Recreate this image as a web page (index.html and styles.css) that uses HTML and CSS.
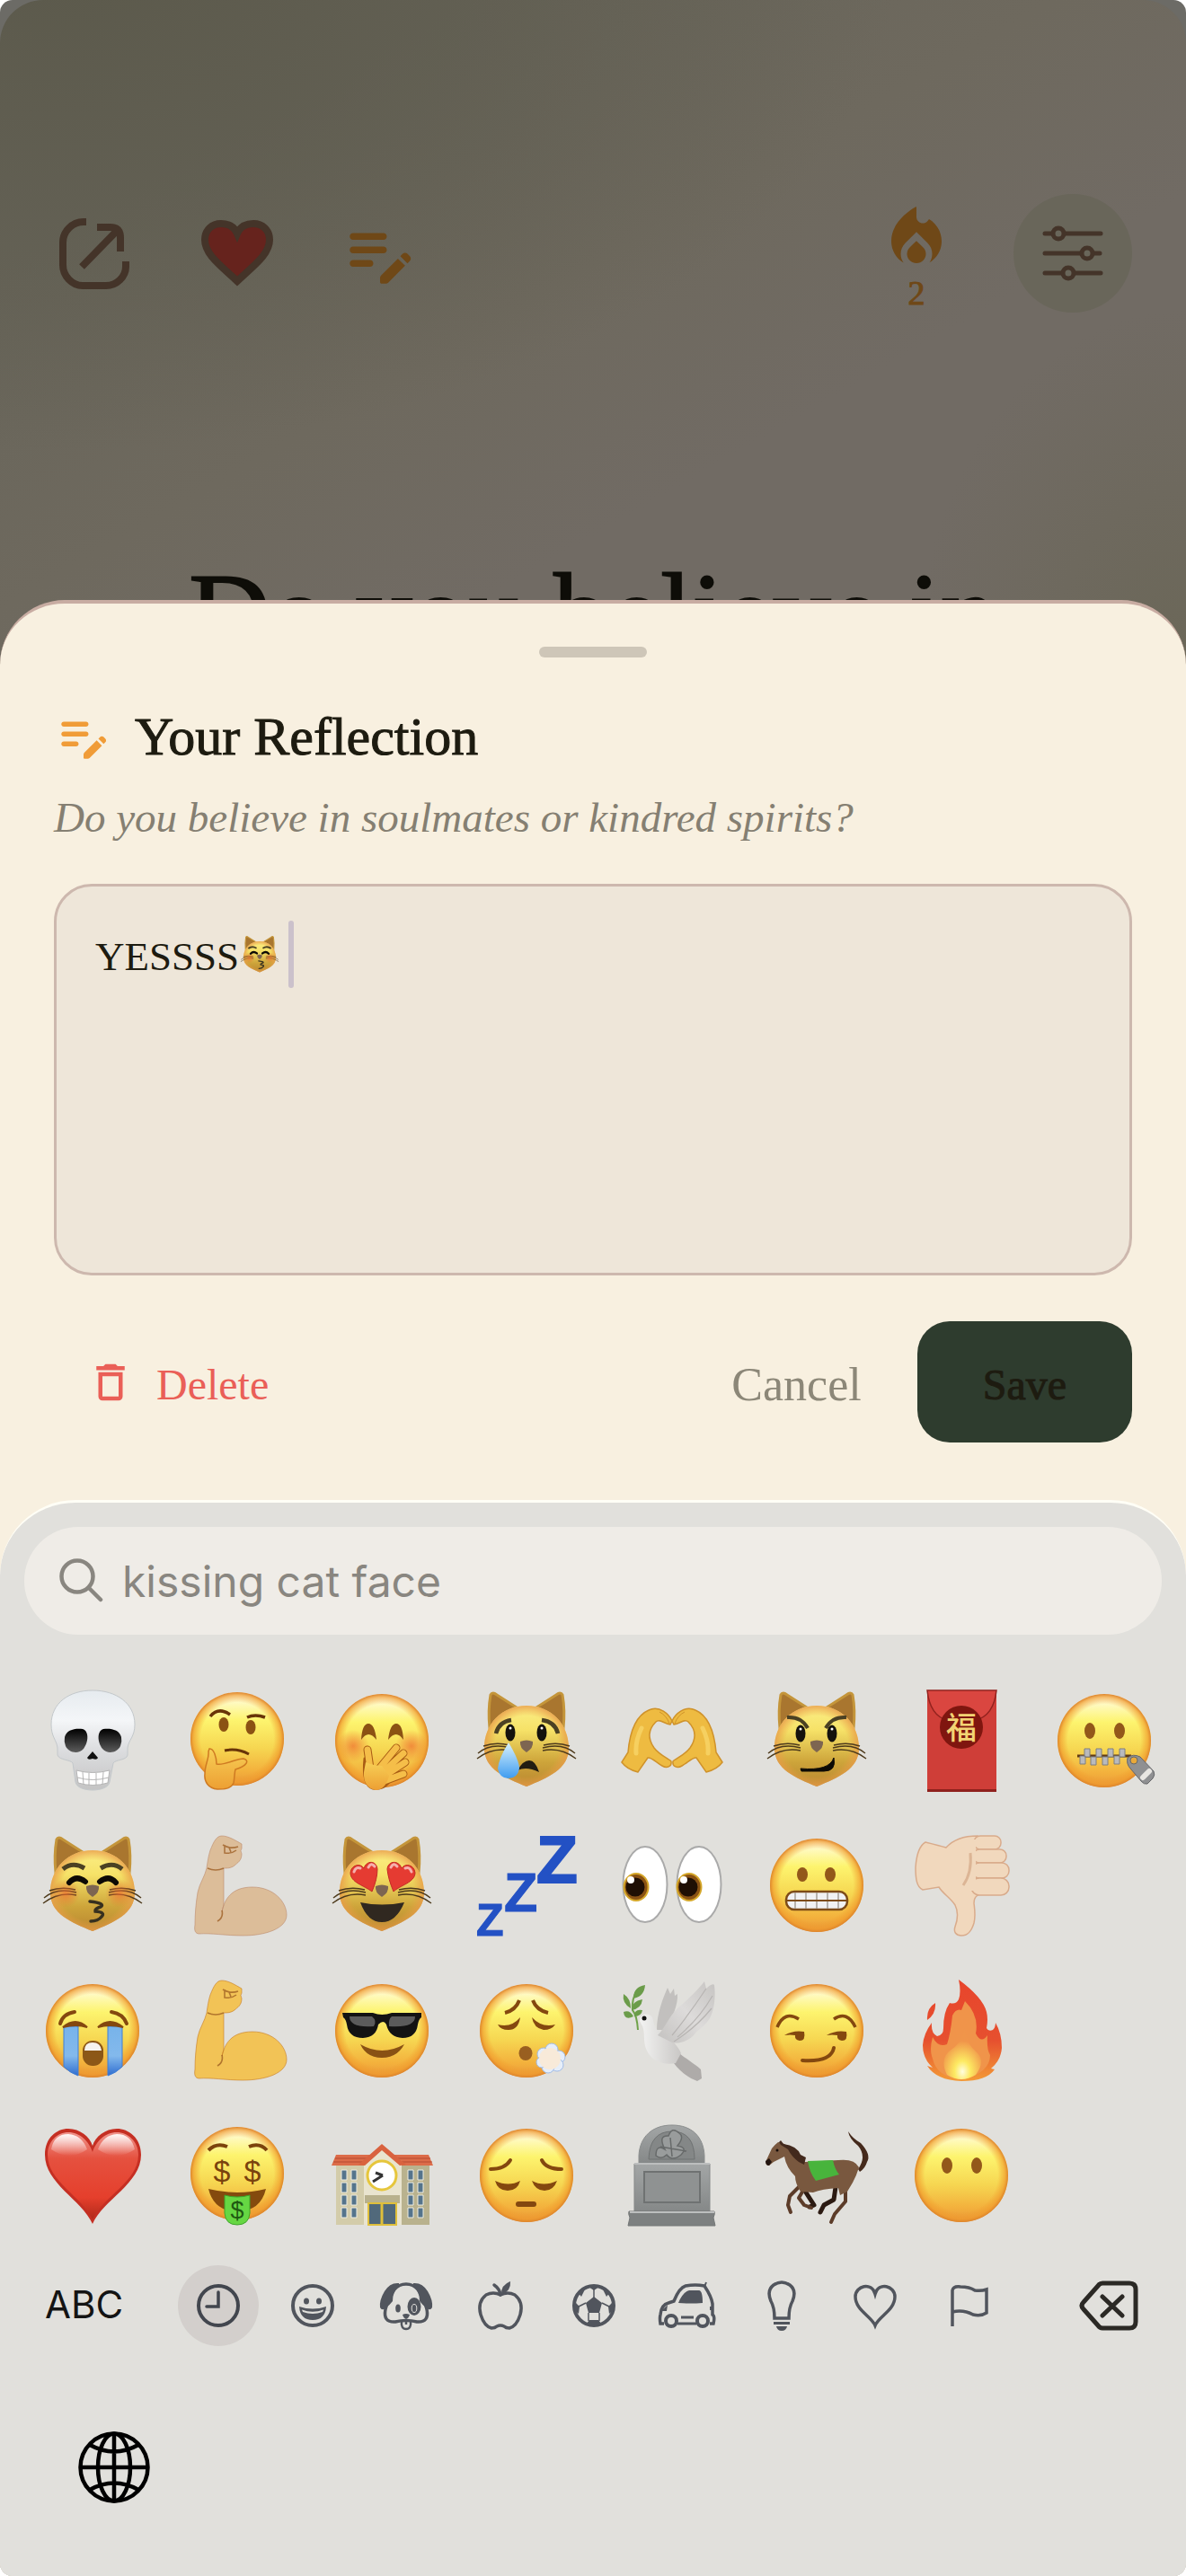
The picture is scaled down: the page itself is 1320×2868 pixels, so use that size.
FILE: index.html
```html
<!DOCTYPE html>
<html lang="en">
<head>
<meta charset="utf-8">
<meta name="viewport" content="width=device-width, initial-scale=1">
<title>Your Reflection</title>
<link rel="stylesheet" href="styles.css">
</head>
<body>
<svg class="sprite" width="0" height="0" aria-hidden="true">
  <defs>
    <linearGradient id="g-face" x1="0" y1="0" x2="0" y2="1"><stop offset=".04" stop-color="#fffce0"/><stop offset=".3" stop-color="#fdf46e"/><stop offset=".6" stop-color="#f6d651"/><stop offset=".85" stop-color="#f3b03c"/><stop offset="1" stop-color="#e8973a"/></linearGradient>
    <radialGradient id="g-rim"><stop offset=".78" stop-color="#f09a2c" stop-opacity="0"/><stop offset=".93" stop-color="#f09a2c" stop-opacity=".65"/><stop offset="1" stop-color="#dd842c"/></radialGradient>
    <linearGradient id="g-cat" x1="0" y1="0" x2="0" y2="1"><stop offset="0" stop-color="#fbee86"/><stop offset=".3" stop-color="#f6e268"/><stop offset=".7" stop-color="#cda43a"/><stop offset="1" stop-color="#b98630"/></linearGradient>
    <radialGradient id="g-catrim"><stop offset=".75" stop-color="#eba045" stop-opacity="0"/><stop offset="1" stop-color="#e89a4a" stop-opacity=".8"/></radialGradient>
    <radialGradient id="g-blush"><stop offset="0" stop-color="#ee6b2f" stop-opacity=".7"/><stop offset="1" stop-color="#ee6b2f" stop-opacity="0"/></radialGradient>
    <linearGradient id="g-hand" x1="0" y1="0" x2="0" y2="1"><stop offset="0" stop-color="#f7cf56"/><stop offset="1" stop-color="#ed9f33"/></linearGradient>
    <linearGradient id="g-bone" x1="0" y1="0" x2="0" y2="1"><stop offset="0" stop-color="#e6ebef"/><stop offset=".3" stop-color="#f4f6f8"/><stop offset=".6" stop-color="#dcdddf"/><stop offset="1" stop-color="#c4c4c4"/></linearGradient>
    <linearGradient id="g-socket" x1="0" y1="0" x2="0" y2="1"><stop offset="0" stop-color="#000"/><stop offset="1" stop-color="#5c5c5c"/></linearGradient>
    <linearGradient id="g-tear" x1="0" y1="0" x2="0" y2="1"><stop offset="0" stop-color="#d9f2fd"/><stop offset="1" stop-color="#3f9cf0"/></linearGradient>
    <linearGradient id="g-stream" x1="0" y1="0" x2="0" y2="1"><stop offset="0" stop-color="#77b3ea"/><stop offset=".6" stop-color="#83b9ec"/><stop offset="1" stop-color="#2f6dd0"/></linearGradient>
    <linearGradient id="g-red" x1="0" y1="0" x2="0" y2="1"><stop offset="0" stop-color="#f0958d"/><stop offset=".3" stop-color="#e5513f"/><stop offset=".75" stop-color="#e53f2c"/><stop offset="1" stop-color="#b02a1b"/></linearGradient>
    <linearGradient id="g-gloss" x1="0" y1="0" x2="0" y2="1"><stop offset="0" stop-color="#fff" stop-opacity=".95"/><stop offset="1" stop-color="#fff" stop-opacity="0"/></linearGradient>
    <linearGradient id="g-fire" x1="0" y1="0" x2="0" y2="1"><stop offset="0" stop-color="#e8452c"/><stop offset=".6" stop-color="#e6502f"/><stop offset="1" stop-color="#f39b36"/></linearGradient>
    <radialGradient id="g-glow" cx=".5" cy=".85" r=".6"><stop offset="0" stop-color="#fffde0"/><stop offset=".35" stop-color="#fdea62"/><stop offset="1" stop-color="#f0954a"/></radialGradient>
    <linearGradient id="g-stone" x1="0" y1="0" x2="0" y2="1"><stop offset="0" stop-color="#a3a6a6"/><stop offset="1" stop-color="#858888"/></linearGradient>
    <linearGradient id="g-bird" x1="0" y1="0" x2="1" y2="0"><stop offset="0" stop-color="#f3f3f2"/><stop offset="1" stop-color="#c9c7c5"/></linearGradient>
    <linearGradient id="g-wing" x1="1" y1="0" x2="0" y2="1"><stop offset="0" stop-color="#c6c4c2"/><stop offset=".5" stop-color="#dddbda"/><stop offset="1" stop-color="#c3c1bf"/></linearGradient>
    <symbol id="face" viewBox="0 0 120 120"><circle cx="60" cy="60" r="52" fill="url(#g-face)"/><circle cx="60" cy="60" r="52" fill="url(#g-rim)"/></symbol>
    <symbol id="cat" viewBox="0 0 120 120">
      <path d="M20 9Q22 5 27 9L49 23 19 46Q17 26 20 9Z" fill="#a9762f" stroke="#c4953a" stroke-width="3"/>
      <path d="M100 9Q98 5 93 9L71 23 101 46Q103 26 100 9Z" fill="#a9762f" stroke="#c4953a" stroke-width="3"/>
      <path d="M60 21C88 21 107 42 107 68 107 92 84 101 60 111 36 101 13 92 13 68 13 42 32 21 60 21Z" fill="url(#g-cat)"/>
      <path d="M60 21C88 21 107 42 107 68 107 92 84 101 60 111 36 101 13 92 13 68 13 42 32 21 60 21Z" fill="url(#g-catrim)"/>
      <path d="M53 61Q60 58 67 61 68 68 60 73 52 68 53 61Z" fill="#7d6551"/>
      <path d="M42 68Q20 62 6 74M42 71Q22 67 5 80M41 65Q26 61 12 66M78 68Q100 62 114 74M78 71Q98 67 115 80M79 65Q94 61 108 66" fill="none" stroke="#4d3a1c" stroke-width="1.4"/>
    </symbol>
    <symbol id="kiss-cat" viewBox="0 0 120 120">
      <use href="#cat"/><circle cx="30" cy="69" r="16" fill="url(#g-blush)"/><circle cx="90" cy="69" r="16" fill="url(#g-blush)"/>
      <path d="M27 42Q38 33 51 41M69 41Q82 33 93 42" fill="none" stroke="#4b4123" stroke-width="5"/>
      <path d="M34 57Q42 48 52 56M68 56Q78 48 86 57" fill="none" stroke="#0d0a05" stroke-width="6" stroke-linecap="round"/>
      <path d="M57 78Q75 80 69 84 62 86 63 89 75 90 70 95 66 100 58 100" fill="none" stroke="#37301f" stroke-width="3.5" stroke-linecap="round"/>
    </symbol>
    <symbol id="arm" viewBox="0 0 120 120">
      <path d="M43 5C50 5 58 10 65 14V19Q63 21 65 25C65 33 60 35 57 38 53 41 49 41 45 41V82L43 89C46 76 53 62 77 62 100 62 115 78 115 93 115 108 92 116 66 116 48 116 30 113 18 114 13 114 12 110 13 104 13 92 14 80 16 68 18 58 24 50 26 41 27 34 28 27 30 21 34 11 37 5 43 5Z" stroke-opacity=".6"/>
      <path d="M43 88Q45 96 38 100M27 41Q36 45 45 41M44 15Q52 20 61 17M46 15V24Q54 25 59 21M51 18L53 23" fill="none" stroke="#9b5b20" stroke-opacity=".75" stroke-width="1.6"/>
    </symbol>
    <symbol id="note" viewBox="0 0 24 24"><path d="M14 11c0 .55-.45 1-1 1H4c-.55 0-1-.45-1-1s.45-1 1-1h9c.55 0 1 .45 1 1zM3 7c0 .55.45 1 1 1h9c.55 0 1-.45 1-1s-.45-1-1-1H4c-.55 0-1 .45-1 1zm7 8c0-.55-.45-1-1-1H4c-.55 0-1 .45-1 1s.45 1 1 1h5c.55 0 1-.45 1-1zm8.010-2.130.71-.71c.39-.39 1.020-.39 1.410 0l.71.71c.39.39.39 1.020 0 1.410l-.71.71-2.120-2.120zm-.71.71-5.010 5.010c-.18.18-.29.44-.29.7v1.210c0 .28.22.5.5.5h1.210c.27 0 .52-.11.71-.29l5.010-5.010-2.130-2.120z"/></symbol>
  </defs>
</svg>

<div class="screen">
  <main class="backdrop">
    <header class="topbar">
      <button class="tool" type="button" aria-label="Share">
        <svg width="78" height="79" viewBox="0 0 78 79" fill="none" stroke="#443429" stroke-width="8"><path d="M30 4H27C14 4 4 15 4 27V52C4 64 14 75 26 75H52C64 75 74 65 74 54V48M42 10H57Q68 10 68 22V37M66 12 25 54"/></svg>
      </button>
      <button class="tool" type="button" aria-label="Favourite">
        <svg width="80" height="76" viewBox="0 0 80 76" fill="#66231d" stroke="#443429" stroke-width="8"><path d="M40 69C21 51 4 39 4 23 4 12 12 5 22 5 31 5 37 9 40 16 43 9 49 5 58 5 68 5 76 12 76 23 76 39 59 51 40 69Z"/></svg>
      </button>
      <button class="tool" type="button" aria-label="Write reflection">
        <svg width="90" height="90" fill="#6f4817"><use href="#note"/></svg>
      </button>
      <button class="tool streak" type="button" aria-label="Streak: 2">
        <svg width="84" height="84" viewBox="0 0 24 24" fill="#6f4817"><path d="M12 12.900l-2.130 2.090C9.310 15.550 9 16.280 9 17.060 9 18.680 10.350 20 12 20s3-1.320 3-2.940c0-.78-.31-1.520-.87-2.070L12 12.900z"/><path d="M16 6l-.44.55C14.380 8.020 12 7.190 12 5.300V2S4 6 4 13c0 2.920 1.560 5.470 3.890 6.860-.56-.79-.89-1.760-.89-2.800 0-1.320.52-2.560 1.470-3.500L12 10.100l3.530 3.470c.95.93 1.470 2.170 1.470 3.500 0 1.020-.31 1.960-.85 2.750 1.890-1.150 3.290-3.060 3.710-5.300.66-3.550-1.070-6.900-3.860-8.520z"/></svg>
        <span>2</span>
      </button>
      <button class="tool round" type="button" aria-label="Settings">
        <svg width="68" height="62" viewBox="-1 -1 68 62" fill="none" stroke="#443429" stroke-width="5" stroke-linecap="round"><path d="M2 8H9M24 8H64M2 30H41M56 30H63M2 52H20M35 52H64"/><circle cx="17" cy="8" r="6"/><circle cx="49" cy="30" r="6"/><circle cx="28" cy="52" r="6"/></svg>
      </button>
    </header>
    <h1 class="question">Do you believe in</h1>
  </main>

  <section class="sheet" aria-labelledby="sheet-title">
    <form class="reflection">
      <span class="handle"></span>
      <div class="heading">
        <svg width="66" height="66" fill="#f09c38" aria-hidden="true"><use href="#note"/></svg>
        <h2 id="sheet-title">Your Reflection</h2>
      </div>
      <label class="prompt" for="answer">Do you believe in soulmates or kindred spirits?</label>
      <div class="field">
        <textarea id="answer">YESSSS</textarea>
        <span class="typed-end" aria-hidden="true"><svg width="46" height="46"><use href="#kiss-cat"/></svg><i class="caret"></i></span>
      </div>
      <div class="actions">
        <button class="action delete" type="button">
          <svg width="54" height="54" viewBox="0 0 24 24" fill="#ea5f57" aria-hidden="true"><path d="M16 9v10H8V9h8m-1.500-6h-5l-1 1H5v2h14V4h-3.500l-1-1zM18 7H6v12c0 1.100.9 2 2 2h8c1.100 0 2-.9 2-2V7z"/></svg>
          <span>Delete</span></button>
        <button class="action cancel" type="button"><span>Cancel</span></button>
        <button class="action save" type="submit"><span>Save</span></button>
      </div>
    </form>

    <div class="keyboard">
      <div class="search">
        <svg width="50" height="50" viewBox="0 0 50 50" fill="none" stroke="#898680" stroke-width="4.500" stroke-linecap="round" aria-hidden="true"><circle cx="20" cy="20" r="17.500"/><path d="M33 33 46 46"/></svg>
        <input type="text" aria-label="Search emoji" placeholder="kissing cat face">
      </div>

      <div class="emoji-grid">
        <button type="button" aria-label="Skull"><svg viewBox="0 0 120 120"><path d="M14 42C14 18 34 4 60 4S107 18 107 42C107 56 100 59 99 68V76C98 82 85 81 83 85L79 106C77 118 43 118 41 106L38 85C36 81 23 82 21 76V68C20 59 14 56 14 42Z" fill="url(#g-bone)" stroke="#c3c8cb" stroke-width="1"/><path d="M29 56C31 48 40 46 49 47 56 49 56 61 50 69 44 76 33 73 30 66Q28 61 29 56ZM92 56C90 48 81 46 72 47 65 49 65 61 71 69 77 76 88 73 91 66Q93 61 92 56Z" fill="url(#g-socket)"/><path d="M60 72 66 79Q65 82 60 80 55 82 54 79Z" fill="#111"/><path d="M42 93Q60 98 79 93L77 107Q60 112 44 107Z" fill="#fff" stroke="#b5b5b5"/><path d="M49 95 50 109M56 96V110M64 96V110M72 95 71 109M43 101Q60 106 78 101" fill="none" stroke="#b5b5b5"/></svg></button>
        <button type="button" aria-label="Kissing cat"><svg><use href="#kiss-cat"/></svg></button>
        <button type="button" aria-label="Loudly crying"><svg viewBox="0 0 120 120"><use href="#face" y="1"/><path d="M28 56H44V111Q35 108 28 101ZM77 56H93V101Q86 108 77 111Z" fill="url(#g-stream)" stroke="#3f7fd6" stroke-width="1"/><path d="M27 57Q41 45 54 57 42 53 27 57ZM66 57Q79 45 94 57 79 53 66 57Z" fill="#84480f" stroke="#84480f" stroke-width="2"/><path d="M24 53Q27 42 40 40M81 40Q94 42 98 53" fill="none" stroke="#84480f" stroke-width="4" stroke-linecap="round"/><rect x="49" y="72" width="23" height="28" rx="11" fill="#8c5717"/><path d="M51 83Q51 74 60 74T70 83Z" fill="#f6f3ef"/></svg></button>
        <button type="button" aria-label="Red heart"><svg viewBox="0 0 120 120"><path d="M60 115C48 88 7 70 7 38 7 19 20 9 33 9 46 9 57 18 60 28 63 18 74 9 87 9 100 9 114 19 114 38 114 70 72 88 60 115Z" fill="#c52f23"/><path d="M60 110C48 84 10 68 10 38 10 23 21 13 33 13 46 13 56 23 60 35 64 23 74 13 87 13 99 13 111 23 111 38 111 68 72 84 60 110Z" fill="url(#g-red)"/><path d="M14 32Q17 15 33 15 48 16 54 32 34 46 14 32ZM66 32Q72 16 87 15 103 15 107 32 86 46 66 32Z" fill="url(#g-gloss)"/></svg></button>

        <button type="button" aria-label="Thinking"><svg viewBox="0 0 120 120"><use href="#face" y="-2"/><path d="M30 33Q39 22 52 31M71 34Q80 30 91 34" fill="none" stroke="#683408" stroke-width="3.500"/><ellipse cx="45" cy="42" rx="5.500" ry="8" fill="#8b5213"/><ellipse cx="75" cy="45" rx="5.500" ry="8" fill="#8b5213"/><path d="M46 71Q60 68 73 75" fill="none" stroke="#683408" stroke-width="3"/><path d="M29 69C34 68 37 79 37 86 46 88 58 80 67 80 74 82 71 88 58 92 57 95 57 102 56 107 53 114 45 114 38 114 28 113 23 106 24 97 24 86 29 80 28 72Z" fill="url(#g-hand)" stroke="#cf7a22" stroke-width="1.500"/></svg></button>
        <button type="button" aria-label="Flexed biceps, medium-light"><svg fill="#dcbd99" stroke="#bd8b6c"><use href="#arm"/></svg></button>
        <button type="button" aria-label="Flexed biceps"><svg fill="#f2c356" stroke="#c67c23"><use href="#arm"/></svg></button>
        <button type="button" aria-label="Money mouth"><svg viewBox="0 0 120 120"><use href="#face" y="-1"/><path d="M28 33Q37 24 49 29M73 29Q85 24 93 33" fill="none" stroke="#7c430c" stroke-width="4"/><path d="M28 76Q60 84 92 76 86 101 60 101T28 76Z" fill="#844a0e"/><path d="M46 83Q60 87 74 83V103Q73 116 60 116T46 103Z" fill="#66d743" stroke="#3da52a"/><g fill="#7a430d" font-family="Liberation Sans" font-size="34" text-anchor="middle"><text x="43" y="68">$</text><text x="77" y="68">$</text><text x="60" y="109" font-size="27" fill="#1f5a12">$</text></g></svg></button>

        <button type="button" aria-label="Hand over mouth"><svg viewBox="0 0 120 120"><use href="#face"/><circle cx="28" cy="66" r="18" fill="url(#g-blush)"/><circle cx="93" cy="66" r="18" fill="url(#g-blush)"/><path d="M37 59Q38 41 45 41T54 59Q45 47 37 59ZM67 59Q69 41 76 41T84 59Q76 47 67 59Z" fill="#8b5213"/><g stroke-linecap="round" fill="none"><path d="M48 98 44 70M53 96 76 68M58 98 84 74M60 101 86 84M60 106 84 97" stroke="#a95c14" stroke-width="9"/><path d="M41 80Q38 110 50 113 66 115 72 98" stroke="#a95c14" stroke-width="3"/><path d="M48 98 44 70M53 96 76 68M58 98 84 74M60 101 86 84M60 106 84 97" stroke="#f5be49" stroke-width="7"/></g><path d="M42 84Q52 88 60 88L68 99Q64 115 53 115 39 112 40 95Z" fill="url(#g-hand)"/></svg></button>
        <button type="button" aria-label="Heart-eyes cat"><svg viewBox="0 0 120 120"><use href="#cat"/><g fill="#e53b32" stroke="#c22a23"><path d="M49 67C40 60 25 57 25 46 26 37 36 35 40 41 43 32 54 32 55 42Q55 53 49 67Z"/><path d="M73 67C80 60 97 57 97 46 96 37 86 35 82 41 79 32 67 32 66 42Q67 53 73 67Z"/></g><path d="M29 45Q31 39 36 41M45 40Q48 34 52 39M70 40Q73 34 77 39M86 41Q91 39 93 45" fill="none" stroke="#fff" stroke-opacity=".6" stroke-width="3" stroke-linecap="round"/><path d="M36 79Q60 84 85 79 76 101 60 101T36 79Z" fill="#302820"/></svg></button>
        <button type="button" aria-label="Sunglasses"><svg viewBox="0 0 120 120"><use href="#face" y="1"/><path d="M36 76Q60 90 85 76 77 91 60 91T36 76Z" fill="#895114"/><path d="M16 41H50Q60 45 71 41H104V46Q101 48 100 54 98 69 83 69 68 68 65 54 62 48 56 54 54 68 39 69 23 69 21 54 20 48 17 46Z" fill="#131313"/><path d="M24 45H49Q55 50 51 56 24 58 24 45ZM71 45H97Q97 58 68 56 67 48 71 45Z" fill="#7b7b7b" opacity=".7"/></svg></button>
        <button type="button" aria-label="School"><svg viewBox="0 0 120 120"><path d="M9 49H113V116H9Z" fill="#d3ccaa"/><path d="M82 49H113V116H82Z" fill="#b9b28e"/><path d="M9 38H112L117 50H4Z" fill="#dc6c49"/><path d="M8 42H114M6 46H116" stroke="#b64a30"/><path d="M40 45 60 30 82 45V116H40Z" fill="#e9e4cf"/><path d="M34 49 60 26 87 49 80 50 60 33 41 50Z" fill="#d9623f"/><circle cx="60" cy="61" r="16" fill="#fff" stroke="#e6c63c" stroke-width="3"/><path d="M61 61 50 68M61 61 53 58" stroke="#333" stroke-width="3"/><path d="M41 83H80V92H41Z" fill="#b8b18d"/><path d="M45 92H76V116H45Z" fill="#51697b" stroke="#dfbf3b" stroke-width="2"/><path d="M60 92V116" stroke="#dfbf3b" stroke-width="3"/><g fill="#55748c" stroke="#efeee2" stroke-width="1"><path d="M15 55h6v11h-6zM26 55h6v11h-6zM15 69h6v11h-6zM26 69h6v11h-6zM15 83h6v11h-6zM26 83h6v11h-6zM15 97h6v11h-6zM26 97h6v11h-6zM89 55h6v11h-6zM100 55h6v11h-6zM89 69h6v11h-6zM100 69h6v11h-6zM89 83h6v11h-6zM100 83h6v11h-6zM89 97h6v11h-6zM100 97h6v11h-6z"/></g></svg></button>

        <button type="button" aria-label="Crying cat"><svg viewBox="0 0 120 120"><use href="#cat"/><path d="M26 52Q29 39 43 37M77 37Q92 39 95 52" fill="none" stroke="#4b4123" stroke-width="4.500"/><ellipse cx="42" cy="51" rx="5.500" ry="9.500" fill="#14120d"/><ellipse cx="77" cy="51" rx="5.500" ry="9.500" fill="#14120d"/><circle cx="42" cy="46" r="1.500" fill="#fff"/><circle cx="77" cy="46" r="1.500" fill="#fff"/><path d="M50 93Q56 82 63 82T74 95Q60 88 50 93Z" fill="#211c12"/><path d="M40 62Q52 82 52 91 50 102 40 102T28 91Q29 80 40 62Z" fill="url(#g-tear)"/></svg></button>
        <button type="button" aria-label="Zzz"><svg viewBox="0 0 120 120"><g fill="#2351c4" stroke="#2351c4" font-family="Liberation Sans" font-weight="700"><text x="71" y="57" font-size="75" stroke-width="2">Z</text><text x="35" y="89" font-size="61">Z</text><text x="4" y="116" font-size="50">Z</text></g></svg></button>
        <button type="button" aria-label="Exhaling"><svg viewBox="0 0 120 120"><use href="#face" y="1"/><path d="M36 41Q48 38 52 27M67 27Q71 38 84 41" fill="none" stroke="#84480f" stroke-width="4"/><path d="M28 54Q43 58 53 46 51 60 40 60 31 60 28 54ZM66 46Q77 58 92 54 88 60 79 60 68 58 66 46Z" fill="#84480f"/><ellipse cx="59" cy="86" rx="7.500" ry="8" fill="#995f20"/><g fill="#e6eef9" stroke="#9fbbe8"><circle cx="79" cy="87" r="7"/><circle cx="88" cy="82" r="7"/><circle cx="96" cy="90" r="7"/><circle cx="94" cy="99" r="7"/><circle cx="84" cy="101" r="7"/><circle cx="77" cy="96" r="6"/></g><circle cx="86" cy="92" r="12" fill="#f8ead9"/></svg></button>
        <button type="button" aria-label="Pensive"><svg viewBox="0 0 120 120"><use href="#face" y="1"/><path d="M20 54Q36 54 42 44M77 44Q82 54 99 54" fill="none" stroke="#84480f" stroke-width="4" stroke-linecap="round"/><path d="M25 67Q40 74 53 67 50 78 39 78T25 67ZM66 67Q79 74 94 67 90 78 80 78T66 67Z" fill="#84480f"/><rect x="48" y="90" width="23" height="6" rx="3" fill="#84480f"/></svg></button>

        <button type="button" aria-label="Heart hands"><svg viewBox="0 0 120 120"><g fill="#eebb41" stroke="#cf922b" stroke-width="1.500"><path d="M4 84 11 73C13 50 20 32 34 26 46 20 57 31 60 38L58 42C51 41 46 35 42 39 33 48 33 58 40 68 46 76 56 80 59 83 60 89 54 91 49 88 42 84 37 78 33 79L22 95Q10 92 4 84Z"/><path d="M116 84 109 73C107 50 100 32 86 26 74 20 63 31 60 38L62 42C69 41 74 35 78 39 87 48 87 58 80 68 74 76 64 80 61 83 60 89 66 91 71 88 78 84 83 78 87 79L98 95Q110 92 116 84Z"/></g><path d="M26 46Q19 60 20 74M94 46Q101 60 100 74" fill="none" stroke="#f6d060" stroke-width="5" stroke-linecap="round"/><path d="M46 28Q54 32 57 41M74 28Q66 32 63 41" fill="none" stroke="#cf922b"/></svg></button>
        <button type="button" aria-label="Eyes"><svg viewBox="0 0 120 120"><g fill="#fff" stroke="#aaa" stroke-width="2"><ellipse cx="30" cy="59" rx="24.500" ry="42"/><ellipse cx="90" cy="59" rx="24.500" ry="42"/></g><g fill="#8a5214" stroke="#d5a72a" stroke-width="2"><ellipse cx="20" cy="62" rx="13.500" ry="15"/><ellipse cx="79" cy="62" rx="13.500" ry="15"/></g><g fill="#1f0f04"><circle cx="19" cy="62" r="10.500"/><circle cx="78" cy="62" r="10.500"/></g><g fill="#fff"><circle cx="14" cy="54" r="4"/><circle cx="73" cy="54" r="4"/></g></svg></button>
        <button type="button" aria-label="Dove"><svg viewBox="0 0 120 120"><path d="M43 60C43 42 50 24 55 13L58 20 62 14 63 22 66 20C67 32 60 44 56 60Z" fill="#c2c0be"/><path d="M62 97 68 86C78 94 88 100 92 104L93 114 88 117C80 114 70 108 62 97Z" fill="#aeaba9"/><path d="M24 50C24 42 34 40 38 46 40 52 40 58 46 62 56 68 66 76 70 86L64 97C46 100 34 92 30 78 28 68 30 60 26 54Z" fill="url(#g-bird)"/><path d="M44 66C52 58 56 46 66 36 78 26 90 14 96 6L98 14C102 10 106 8 107 10 109 26 106 42 100 50 94 58 88 60 84 66 78 72 68 76 60 74Z" fill="url(#g-wing)"/><path d="M62 73Q86 58 104 36M66 68Q90 48 105 22M60 66Q78 44 98 14" fill="none" stroke="#b7b4b2" stroke-width="1.200"/><circle cx="29" cy="47" r="2.500" fill="#111"/><path d="M22 60Q21 44 16 38 15 25 21 16" fill="none" stroke="#6fa24a" stroke-width="2"/><path d="M17 25Q17 12 30 10 29 23 17 25ZM14 36Q4 30 6 20 14 25 14 36ZM15 38Q15 28 27 26 26 36 15 38ZM17 45Q7 50 6 40 13 37 17 45ZM18 45Q18 36 27 38 26 45 18 45Z" fill="#6b9c4a"/></svg></button>
        <button type="button" aria-label="Headstone"><svg viewBox="0 0 120 120"><path d="M23 48V39C24 18 38 5 60 5S95 18 96 39V48Z" fill="url(#g-stone)" stroke="#8b8e8e"/><path d="M34 43Q35 12 60 12T85 43Z" fill="#848787" stroke="#6f7272"/><path d="M42 39Q42 26 52 32 44 16 56 17 60 6 68 14 74 18 66 28 78 30 70 38 60 46 54 38 48 44 42 39ZM47 29 76 34M58 19 60 40" fill="#999c9c" stroke="#676a6a" stroke-width="1.500"/><path d="M18 48H102V101H18Z" fill="url(#g-stone)" stroke="#858888"/><path d="M29 57H91V91H29Z" fill="#8f9292" stroke="#6f7272" stroke-width="2"/><path d="M12 101H107Q108 104 106 108L108 117H11L13 108Q11 104 12 101Z" fill="#7d8080" stroke="#747777"/><path d="M18 48H102M13 102H107" stroke="#bcbebe" stroke-width="2"/></svg></button>

        <button type="button" aria-label="Wry cat"><svg viewBox="0 0 120 120"><use href="#cat"/><path d="M27 34Q43 33 50 46M93 34Q77 33 70 46" fill="none" stroke="#4b4123" stroke-width="4"/><ellipse cx="42" cy="52" rx="5.500" ry="9.500" fill="#14120d"/><ellipse cx="77" cy="52" rx="5.500" ry="9.500" fill="#14120d"/><circle cx="42" cy="47" r="1.500" fill="#fff"/><circle cx="77" cy="47" r="1.500" fill="#fff"/><path d="M42 91Q74 94 79 79 82 94 68 94 54 94 43 94Z" fill="#0d0a05" stroke="#0d0a05"/></svg></button>
        <button type="button" aria-label="Grimacing"><svg viewBox="0 0 120 120"><use href="#face"/><ellipse cx="44" cy="48" rx="6" ry="8" fill="#93581a"/><ellipse cx="75" cy="48" rx="6" ry="8" fill="#93581a"/><rect x="26" y="67" width="68" height="20" rx="9" fill="#f1f1f3" stroke="#7d4b18" stroke-width="2.500"/><path d="M26 77H94M36 68V86M48 68V86M60 68V86M72 68V86M84 68V86" stroke="#a49d96" stroke-width="1.500"/><path d="M26 77H94" stroke="#7d4b18" stroke-width="2"/></svg></button>
        <button type="button" aria-label="Smirking"><svg viewBox="0 0 120 120"><use href="#face" y="1"/><path d="M16 57Q24 38 40 48M79 48Q94 38 103 57" fill="none" stroke="#84480f" stroke-width="3.500"/><path d="M24 66Q34 60 46 62 48 72 41 72 35 71 36 66 30 65 24 66ZM71 66Q81 60 93 62 95 72 88 72 82 71 83 66 77 65 71 66Z" fill="#84480f"/><path d="M44 94Q62 95 70 91 78 87 79 80" fill="none" stroke="#84480f" stroke-width="4" stroke-linecap="round"/></svg></button>
        <button type="button" aria-label="Horse"><svg viewBox="0 0 120 120"><path d="M106 54Q116 40 106 28 96 20 95 12 100 20 109 25 121 38 116 46 114 53 108 57Z" fill="#452a1c"/><g fill="none" stroke-linejoin="round" stroke-linecap="round"><path d="M81 74 79 88 68 94 64 102M48 73 48 80 57 94 52 96" stroke="#2b1a12" stroke-width="5"/><path d="M92 70 92 90 80 104 76 113M40 74 30 84 28 94 31 102M46 76 40 86 46 94 54 97" stroke="#5c3c29" stroke-width="4"/></g><path d="M17 24Q20 24 24 26 38 34 47 46 66 45 84 44 102 42 107 52 104 62 100 69L94 79 86 83 84 75Q66 76 56 80L42 79Q36 70 36 62 26 52 24 40L12 46 7 50Q2 50 4 44L10 31Q13 27 17 24Z" fill="#79583f"/><path d="M18 24 20 22 23 26Q38 28 42 38L48 41 46 49 40 46Q32 40 28 32L20 27Z" fill="#42291d"/><path d="M3 45 7 42 10 46 7 50Q3 50 3 45Z" fill="#231510"/><circle cx="16" cy="33" r="1.500" fill="#160c08"/><path d="M50 45 78 44Q80 54 85 60L59 67Q52 58 50 45Z" fill="#48b43c"/></svg></button>

        <button type="button" aria-label="Red envelope"><svg viewBox="0 0 120 120"><rect x="22" y="4" width="77" height="113" fill="#cf3e38"/><path d="M22 114H99V117H22Z" fill="#8f211d"/><path d="M22 4H99Q96 32 76 37H44Q25 32 22 4Z" fill="#da4640" stroke="#92221e" stroke-width="1.500"/><circle cx="60" cy="45" r="24" fill="#7f160f"/><text x="60" y="58" font-family="Noto Sans CJK SC" font-weight="500" font-size="34" fill="#f3d373" text-anchor="middle">福</text></svg></button>
        <button type="button" aria-label="Thumbs down"><svg viewBox="0 0 120 120"><g fill="#f1d8bd" stroke="#d9ab8b" stroke-width="1.500"><path d="M20 12C28 14 36 16 43 18 52 8 64 5 78 5L84 70C76 70 74 74 74 80 75 88 76 94 74 102 71 112 67 116 60 116 54 116 51 112 53 106 56 98 57 90 53 82 48 74 40 70 35 62L17 65C10 62 9 52 9 40 10 26 13 16 20 12Z"/><rect x="74" y="5" width="30" height="15" rx="7"/><rect x="73" y="20" width="37" height="15" rx="7"/><rect x="72" y="35" width="41" height="17" rx="8"/><rect x="71" y="52" width="42" height="19" rx="9"/></g><path d="M60 9H76V66H64Z" fill="#f1d8bd"/><path d="M70 24Q72 46 62 60" fill="none" stroke="#dcb595" stroke-width="3"/></svg></button>
        <button type="button" aria-label="Fire"><svg viewBox="0 0 120 120"><path d="M57 4Q84 24 88 40 90 48 88 58 90 62 95 60 98 57 98 52 105 64 105 80 104 94 93 103L97 104Q88 117 60 117 32 116 22 100L28 102Q17 92 17 77 18 64 27 52 26 64 33 67 40 66 40 58 40 40 47 30 54 32 57 26 60 18 57 4ZM31 30Q32 42 22 49 21 36 31 30Z" fill="url(#g-fire)"/><path d="M64 28Q80 44 76 64 82 76 89 66 88 82 92 88 92 108 60 116 32 112 28 92 24 82 28 68 34 80 44 76 48 64 50 44 54 36 60 38Z" fill="#f0944a"/><path d="M64 58Q66 76 76 84 88 94 76 110 60 120 44 110 36 94 46 84 60 76 64 58Z" fill="url(#g-glow)"/></svg></button>
        <button type="button" aria-label="No mouth"><svg viewBox="0 0 120 120"><use href="#face" y="1"/><ellipse cx="44" cy="50" rx="6" ry="9" fill="#93581a"/><ellipse cx="77" cy="50" rx="6" ry="9" fill="#93581a"/></svg></button>

        <button type="button" aria-label="Zipper mouth"><svg viewBox="0 0 120 120"><use href="#face" x="-2"/><ellipse cx="42" cy="49" rx="6" ry="9" fill="#93581a"/><ellipse cx="75" cy="49" rx="6" ry="9" fill="#93581a"/><path d="M28 77H88" stroke="#5f3a14" stroke-width="3"/><g fill="#b9babd" stroke="#7d7e82"><path d="M36 69h6v9h-6zM49 69h6v9h-6zM62 69h6v9h-6zM75 69h6v9h-6zM31 77h6v9h-6zM43 78h6v9h-6zM56 78h6v9h-6zM69 77h6v9h-6z"/></g><path d="M84 79Q90 74 98 78L113 94Q115 98 112 102L106 108Q102 109 99 105L88 92Q82 86 84 79Z" fill="#8f9092" stroke="#66676a"/><circle cx="91" cy="82" r="4" fill="#e9a93a" stroke="#66676a"/><path d="M101 101 108 94" stroke="#e8e6e2" stroke-width="6" stroke-linecap="round"/></svg></button>
      </div>

      <div class="key-row">
        <button class="abc" type="button">ABC</button>
        <nav class="categories" aria-label="Emoji categories">
          <button class="active" type="button" aria-label="Recent"><svg viewBox="0 0 60 60"><circle cx="30" cy="30" r="22"/><path d="M30 15V31H17" stroke-width="3.500" stroke-linecap="round"/></svg></button>
          <button type="button" aria-label="Smileys"><svg viewBox="0 0 60 60"><circle cx="30" cy="30" r="22"/><g fill="#51555d" stroke="none"><ellipse cx="23" cy="25" rx="3" ry="3.500"/><ellipse cx="37" cy="25" rx="3" ry="3.500"/><path d="M15 31Q30 36 45 31 44 46 30 46T15 31Z"/></g><path d="M18 34.500Q30 39 42 34.500L41 37Q30 41 19 37Z" fill="#e1e0dc" stroke="none"/></svg></button>
          <button type="button" aria-label="Animals"><svg viewBox="0 0 60 60"><path d="M17 12Q22 6 30 6T43 12Q50 22 53 34 56 49 42 48 30 45 18 48 4 49 7 34 10 22 17 12Z" stroke-width="3.500"/><g fill="#51555d" stroke="none"><path d="M22 5Q12 4 6 14 0 24 1 32 3 36 7 33 12 29 15 25 15 14 22 8ZM38 5Q48 4 54 14 60 24 59 32 57 36 53 33 48 29 45 25 45 14 38 8Z"/><ellipse cx="39" cy="31" rx="7.500" ry="10"/><ellipse cx="21" cy="33" rx="2.800" ry="4.500"/><path d="M26 40Q30 38 34 40 33 44 30 45 27 44 26 40Z"/></g><ellipse cx="39" cy="33" rx="2.800" ry="4.500" stroke="#e1e0dc" stroke-width="1"/><path d="M25 47Q24 56 30 56T35 47M30 47V51" stroke-width="2.500"/></svg></button>
          <button type="button" aria-label="Food"><svg viewBox="0 0 60 60"><path d="M30 18Q22 14 14 18 4 26 8 40 12 53 20 55 24 55 26 53 30 51 34 53 36 55 40 55 48 53 52 40 56 26 46 18 38 14 30 18Z" stroke-width="3.500"/><path d="M23 7Q29 11 30 18" stroke-width="3.500" stroke-linecap="round"/><path d="M41 3Q42 14 31 18 30 7 41 3Z" fill="#51555d" stroke="none"/></svg></button>
          <button type="button" aria-label="Sports"><svg viewBox="0 0 60 60"><circle cx="30" cy="30" r="22"/><path d="M30 20 39 27 36 38H24L21 27ZM24 9 30 13 36 9 34 7H26ZM9 26 14 31 13 39 8 35ZM51 26 46 31 47 39 52 35ZM21 51 25 46H35L39 51 30 53ZM12 15 20 12 16 20ZM48 15 40 12 44 20Z" fill="#51555d" stroke="none"/><path d="M30 12V21M21 27 13 31M39 27 47 31M24 38V47M36 38V47" stroke-width="1.500"/></svg></button>
          <button type="button" aria-label="Travel"><svg viewBox="0 0 70 60"><path d="M9 50H5Q4 44 5 40 6 29 14 27L20 25Q26 10 33 8 44 6 54 8 62 20 63 28V40Q66 42 64 50H60" stroke-width="3.500"/><path d="M24 50H45M28 43H42" stroke-width="3"/><circle cx="17" cy="47" r="6"/><circle cx="52" cy="47" r="6"/><path d="M54 9 56 4" stroke-width="2"/><path d="M25 27Q30 15 37 13H48Q52 13 52 27 38 28 25 27ZM6 36 13 29 12 36ZM60 31H64V35H60Z" fill="#51555d" stroke="none"/></svg></button>
          <button type="button" aria-label="Objects"><svg viewBox="0 0 60 60"><path d="M22 44Q22 32 18 25 13 13 21 7 30 1 39 7 47 13 42 25 38 32 38 44Z" stroke-width="3.500"/><path d="M21 49.500H39" stroke-width="3"/><path d="M24 53H36Q35 58 30 58T24 53Z" fill="#51555d" stroke="none"/></svg></button>
          <button type="button" aria-label="Symbols"><svg viewBox="0 0 60 60"><path d="M30 52C26 42 8 35 8 20 8 8 26 3 30 17 34 3 52 8 52 20 52 35 34 42 30 52Z" stroke-width="3.500"/></svg></button>
          <button type="button" aria-label="Flags"><svg viewBox="0 0 60 60"><path d="M11 53V13Q12 8 20 9 30 9 36 13 43 14 49 12V38Q43 42 34 40 23 34 11 37" stroke-width="3.500"/></svg></button>
        </nav>
        <button class="backspace" type="button" aria-label="Delete">
          <svg width="66" height="56" viewBox="0 0 66 56" fill="none" stroke="#2b2925" stroke-width="5" stroke-linejoin="round" stroke-linecap="round"><path d="M26 3H56Q63 3 63 10V46Q63 53 56 53H26Q23 53 21 50L5 32Q1 28 5 24L21 6Q23 3 26 3ZM26 18 48 39M48 18 26 39"/></svg>
        </button>
      </div>

      <button class="globe" type="button" aria-label="Next keyboard">
        <svg width="80" height="80" viewBox="0 0 80 80" fill="none" stroke="#000" stroke-width="4.500"><circle cx="40" cy="40" r="37.500"/><ellipse cx="40" cy="40" rx="18" ry="37.500"/><path d="M40 3V77M3 40H77M13 15Q40 30 67 15M13 65Q40 50 67 65"/></svg>
      </button>
    </div>
  </section>
</div>
</body>
</html>
```
FILE: styles.css
```css
* { box-sizing: border-box; }

body {
  margin: 0;
  background: #fff;
  font-family: "Liberation Serif", serif;
  color: #1d1b10;
}

button {
  margin: 0;
  padding: 0;
  border: 0;
  background: none;
  font: inherit;
  color: inherit;
}

svg { flex: none; }

.sprite { position: absolute; }

.screen {
  display: flex;
  flex-direction: column;
  min-height: 100vh;
  overflow: hidden;
  border-radius: 14px;
  background: #6c6b66;
}

.backdrop {
  padding-top: 216px;
  border-radius: 48px 48px 0 0;
  background:
    radial-gradient(ellipse 300px 400px at 100% 100%, #6b6758 0, rgba(107, 103, 88, 0) 100%),
    radial-gradient(ellipse 1200px 720px at 5% -8%, #5b594b 0, rgba(103, 100, 87, 0) 78%),
    linear-gradient(150deg, #68655a 20%, #6e695e 45%, #716b64 65%);
}

.topbar {
  display: flex;
  align-items: center;
  gap: 27px;
  padding: 0 60px 0 39px;
}

.tool {
  display: flex;
  align-items: center;
  justify-content: center;
  width: 132px;
  height: 132px;
}

.streak {
  flex-direction: column;
  margin-left: auto;
  margin-right: 15px;
  padding-top: 4px;
  color: #6f4817;
  font-size: 38px;
  line-height: 38px;
  -webkit-text-stroke: 1px;
}

.round {
  border-radius: 50%;
  background: #69665a;
}

.question {
  margin: 276px 0 0;
  color: #0e0d08;
  font-size: 126px;
  font-weight: 400;
  line-height: 120px;
  text-align: center;
  white-space: nowrap;
  -webkit-text-stroke: 2px;
}

.sheet {
  position: relative;
  display: flex;
  flex: 1;
  flex-direction: column;
  margin-top: -76px;
  border-top: 4px solid #c8aca2;
  border-radius: 72px 72px 0 0;
  background: #f8f0e0;
}

.reflection {
  display: flex;
  flex-direction: column;
  padding: 48px 60px 64px;
}

.handle {
  align-self: center;
  width: 120px;
  height: 12px;
  border-radius: 6px;
  background: #cec6b8;
}

.heading {
  display: flex;
  align-items: center;
  gap: 24px;
  margin-top: 52px;
}

.heading h2 {
  margin: 0;
  font-size: 60px;
  font-weight: 400;
  line-height: 72px;
  -webkit-text-stroke: 1px;
}

.prompt {
  margin-top: 26px;
  color: #857f72;
  font-size: 47px;
  font-style: italic;
  line-height: 56px;
}

.field {
  position: relative;
  margin-top: 46px;
}

.field textarea {
  display: block;
  width: 100%;
  height: 436px;
  padding: 50px 43px;
  border: 3px solid #cdb8ae;
  border-radius: 42px;
  outline: 0;
  resize: none;
  background: #eee6d9;
  color: #1d1b10;
  font-family: inherit;
  font-size: 45px;
  line-height: 56px;
}

.typed-end {
  position: absolute;
  top: 41px;
  left: 206px;
  display: flex;
  align-items: center;
  gap: 9px;
}

.caret {
  width: 6px;
  height: 75px;
  border-radius: 3px;
  background: #cbc1cb;
}

.actions {
  display: flex;
  align-items: center;
  margin-top: 51px;
}

.action {
  display: flex;
  align-items: center;
  height: 135px;
  font-size: 48px;
}

.action span { padding-top: 6px; }

.delete {
  gap: 24px;
  margin-right: auto;
  padding: 0 36px;
  color: #ea5f57;
}

.cancel {
  padding: 0 62px;
  color: #8c8778;
  font-size: 52px;
}

.save {
  padding: 0 73px;
  border-radius: 36px;
  background: #2e3c2e;
  -webkit-text-stroke: 1px;
}

.keyboard {
  flex: 1;
  padding: 27px 0 60px;
  border-top: 3px solid #fffef6;
  border-radius: 84px 84px 0 0;
  background: #e1e0dc;
  font-family: Inter, sans-serif;
}

.search {
  display: flex;
  align-items: center;
  gap: 20px;
  height: 120px;
  margin: 0 27px;
  padding: 0 39px;
  border-radius: 60px;
  background: #efece7;
}

.search input {
  flex: 1;
  min-width: 0;
  padding: 0;
  border: 0;
  outline: 0;
  background: none;
  font-family: inherit;
  font-size: 48px;
}

.search input::placeholder {
  color: #898680;
  opacity: 1;
}

.emoji-grid {
  display: grid;
  grid-auto-flow: column;
  grid-template-columns: repeat(8, 1fr);
  grid-template-rows: repeat(4, 161px);
  margin-top: 37px;
  padding: 0 8px 0 22px;
}

.emoji-grid button {
  display: flex;
  align-items: center;
  justify-content: center;
}

.emoji-grid svg {
  width: 120px;
  height: 120px;
  overflow: visible;
}

.key-row {
  display: flex;
  align-items: center;
  margin-top: 21px;
  padding: 0 53px 0 50px;
}

.abc {
  width: 141px;
  padding-bottom: 4px;
  color: #141414;
  font-size: 42px;
  text-align: left;
}

.categories {
  display: grid;
  flex: 1;
  grid-template-columns: repeat(9, 1fr);
  justify-items: center;
}

.categories button {
  display: flex;
  align-items: center;
  justify-content: center;
  width: 90px;
  height: 90px;
  border-radius: 50%;
}

.categories svg {
  height: 60px;
  fill: none;
  stroke: #51555d;
  stroke-width: 4;
}

.categories .active { background: #d3cfcc; }

.categories .active svg { stroke: #42464e; }

.backspace {
  display: flex;
  justify-content: flex-end;
  width: 136px;
}

.globe {
  display: block;
  margin: 95px 0 0 87px;
}

.globe svg { display: block; }
```
